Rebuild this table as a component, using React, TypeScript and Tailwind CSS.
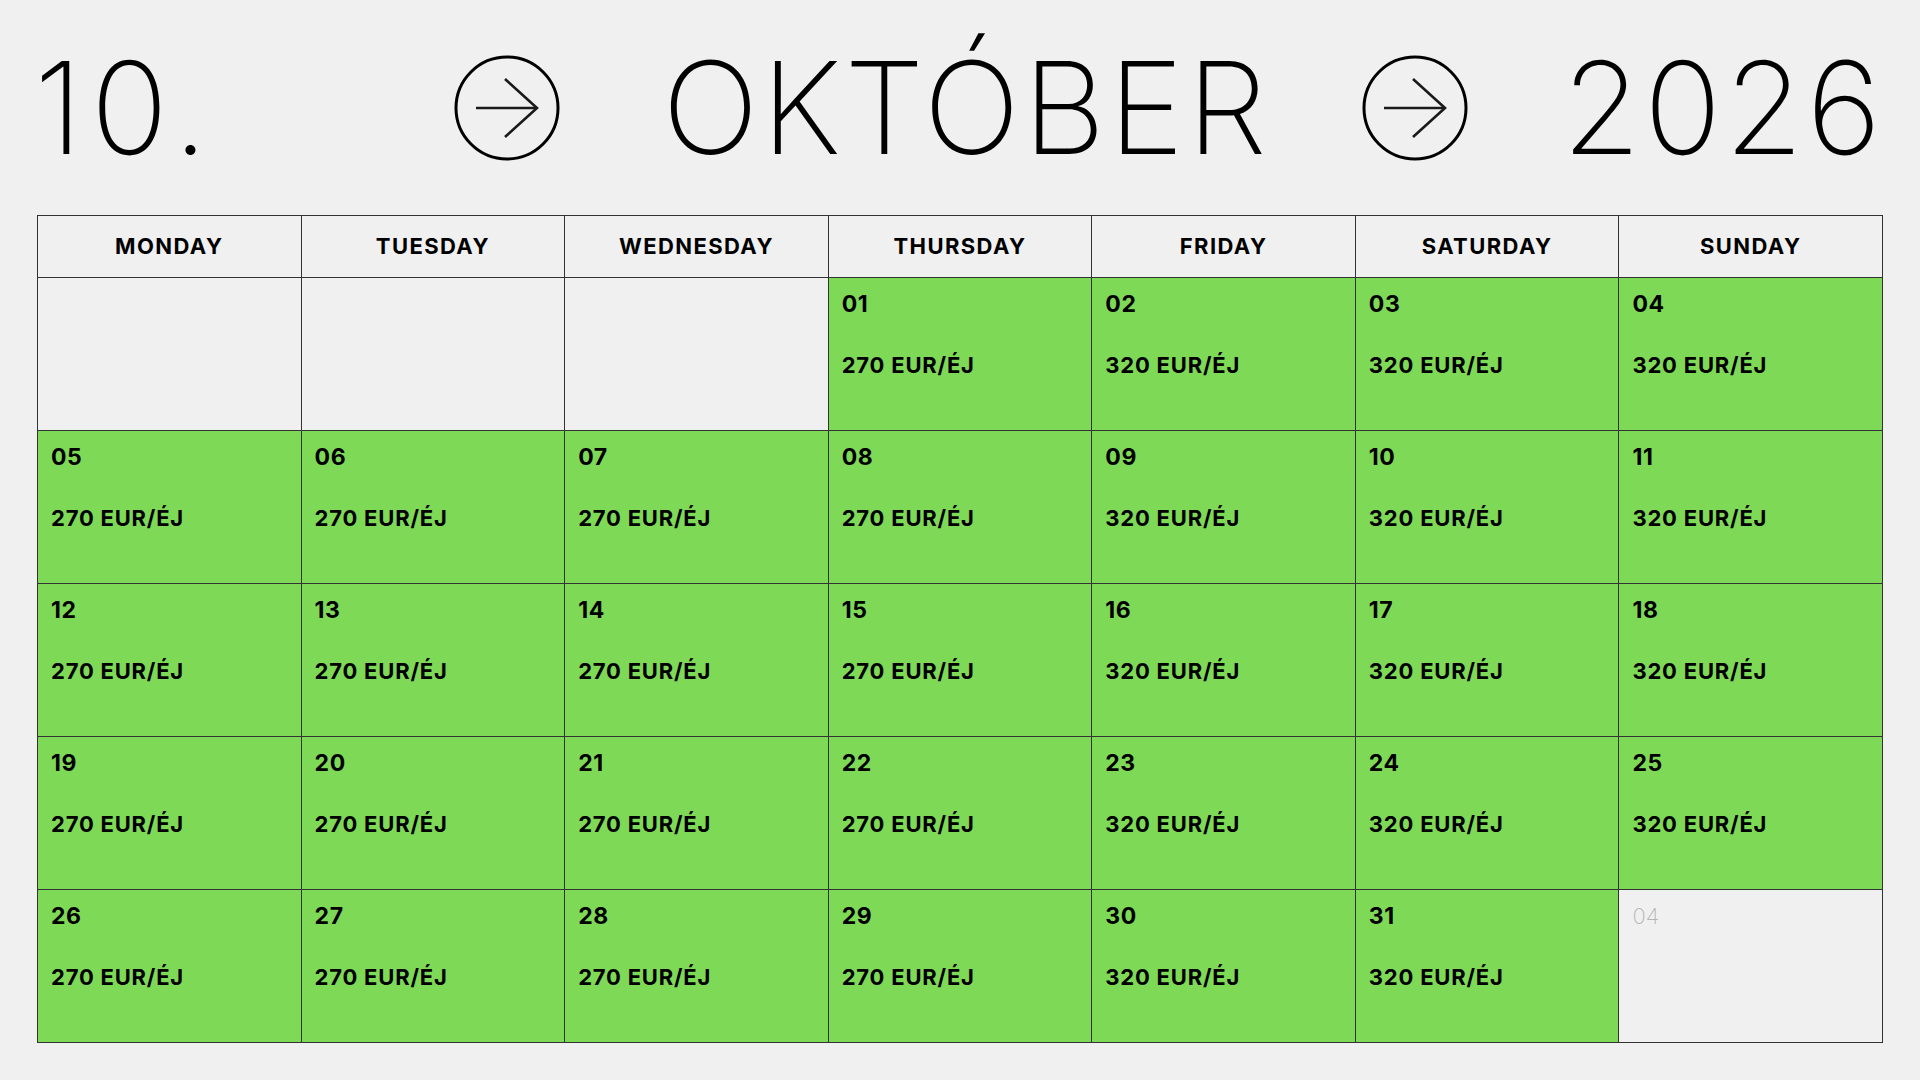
import React from 'react';

const DAYS = ['MONDAY', 'TUESDAY', 'WEDNESDAY', 'THURSDAY', 'FRIDAY', 'SATURDAY', 'SUNDAY'];

type Cell = { day?: string; price?: string; muted?: string };

function buildCells(): Cell[] {
  const cells: Cell[] = [{}, {}, {}];
  for (let d = 1; d <= 31; d++) {
    const col = (d + 2) % 7;
    const price = col >= 4 ? '320 EUR/ÉJ' : '270 EUR/ÉJ';
    cells.push({ day: String(d).padStart(2, '0'), price });
  }
  cells.push({ muted: '04' });
  return cells;
}

function ArrowCircle() {
  return (
    <svg width="106" height="106" viewBox="0 0 106 106" fill="none" className="shrink-0">
      <circle cx="53" cy="53" r="51" stroke="#000" strokeWidth="3" />
      <line x1="22" y1="53" x2="83" y2="53" stroke="#1a1a1a" strokeWidth="2.6" />
      <polyline points="51,24 83,53 51,82" stroke="#1a1a1a" strokeWidth="2.6" fill="none" />
    </svg>
  );
}

export default function App() {
  const cells = buildCells();
  return (
    <div className="w-[1920px] h-[1080px] bg-[#f0f0f0] text-black" style={{ fontFamily: 'Inter, "Noto Sans", sans-serif' }}>
      {/* title */}
      <div className="h-[215px] flex items-center pl-[34px] pr-[36px] font-[150] text-[128px] leading-none tracking-[3px]">
        <span className="w-[420px] tracking-[8px]">10.</span>
        <ArrowCircle />
        <span className="flex-1 text-center pl-[10px]">OKTÓBER</span>
        <ArrowCircle />
        <span className="ml-[94px]">2026</span>
      </div>

      {/* calendar */}
      <div className="mx-[37px] grid grid-cols-7 border-l border-t border-[#333]">
        {DAYS.map((d) => (
          <div key={d} className="h-[62px] border-r border-b border-[#333] flex items-center justify-center text-[22px] font-bold tracking-[1.4px]">
            {d}
          </div>
        ))}
        {cells.map((c, i) => (
          <div
            key={i}
            className={`h-[153px] border-r border-b border-[#333] px-[13px] pt-[12px] ${c.day ? 'bg-[#7ed957]' : ''}`}
          >
            {c.day && (
              <>
                <div className="text-[23px] font-bold leading-[28px] tracking-[0.6px]">{c.day}</div>
                <div className="mt-[33px] text-[22px] font-bold leading-[28px] tracking-[0.8px]">{c.price}</div>
              </>
            )}
            {c.muted && <div className="text-[22px] font-extralight leading-[28px] text-[#b5b5b5]">{c.muted}</div>}
          </div>
        ))}
      </div>
    </div>
  );
}
